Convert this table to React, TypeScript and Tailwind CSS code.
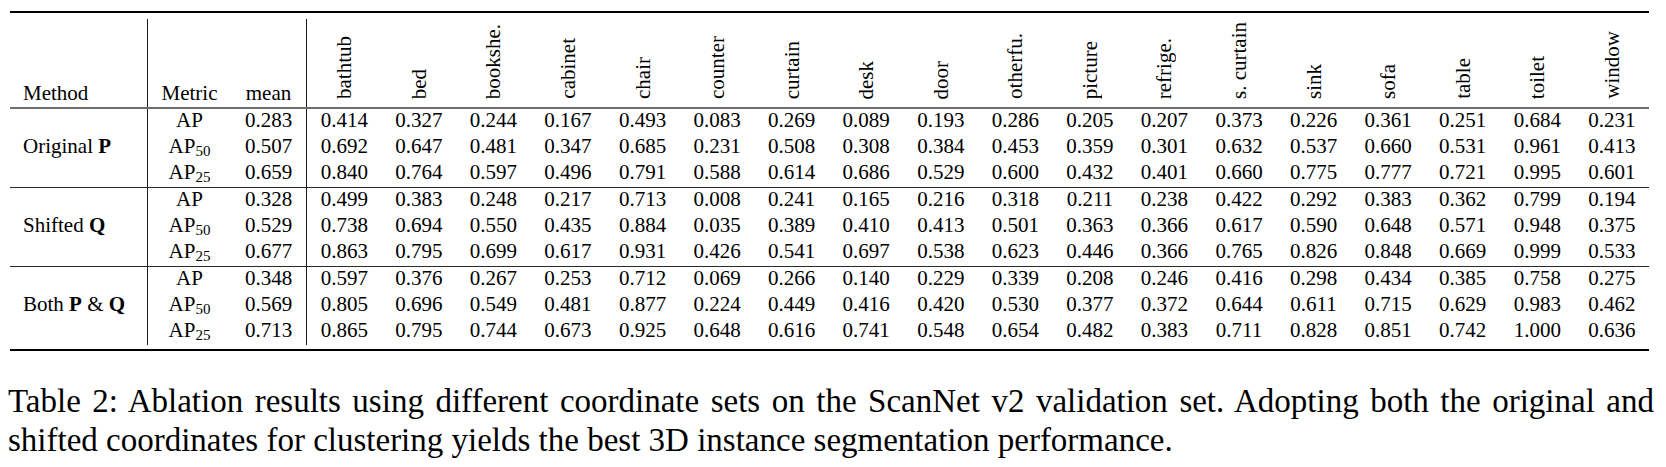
import React from "react";

const classes = [
  "bathtub",
  "bed",
  "bookshe.",
  "cabinet",
  "chair",
  "counter",
  "curtain",
  "desk",
  "door",
  "otherfu.",
  "picture",
  "refrige.",
  "s. curtain",
  "sink",
  "sofa",
  "table",
  "toilet",
  "window",
];

type Group = {
  label: React.ReactNode;
  rows: { metric: string; mean: string; vals: string[] }[];
};

const split = (s: string) => s.trim().split(/\s+/);

const groups: Group[] = [
  {
    label: (
      <>
        Original <b>P</b>
      </>
    ),
    rows: [
      { metric: "", mean: "0.283", vals: split("0.414 0.327 0.244 0.167 0.493 0.083 0.269 0.089 0.193 0.286 0.205 0.207 0.373 0.226 0.361 0.251 0.684 0.231") },
      { metric: "50", mean: "0.507", vals: split("0.692 0.647 0.481 0.347 0.685 0.231 0.508 0.308 0.384 0.453 0.359 0.301 0.632 0.537 0.660 0.531 0.961 0.413") },
      { metric: "25", mean: "0.659", vals: split("0.840 0.764 0.597 0.496 0.791 0.588 0.614 0.686 0.529 0.600 0.432 0.401 0.660 0.775 0.777 0.721 0.995 0.601") },
    ],
  },
  {
    label: (
      <>
        Shifted <b>Q</b>
      </>
    ),
    rows: [
      { metric: "", mean: "0.328", vals: split("0.499 0.383 0.248 0.217 0.713 0.008 0.241 0.165 0.216 0.318 0.211 0.238 0.422 0.292 0.383 0.362 0.799 0.194") },
      { metric: "50", mean: "0.529", vals: split("0.738 0.694 0.550 0.435 0.884 0.035 0.389 0.410 0.413 0.501 0.363 0.366 0.617 0.590 0.648 0.571 0.948 0.375") },
      { metric: "25", mean: "0.677", vals: split("0.863 0.795 0.699 0.617 0.931 0.426 0.541 0.697 0.538 0.623 0.446 0.366 0.765 0.826 0.848 0.669 0.999 0.533") },
    ],
  },
  {
    label: (
      <>
        Both <b>P</b> &amp; <b>Q</b>
      </>
    ),
    rows: [
      { metric: "", mean: "0.348", vals: split("0.597 0.376 0.267 0.253 0.712 0.069 0.266 0.140 0.229 0.339 0.208 0.246 0.416 0.298 0.434 0.385 0.758 0.275") },
      { metric: "50", mean: "0.569", vals: split("0.805 0.696 0.549 0.481 0.877 0.224 0.449 0.416 0.420 0.530 0.377 0.372 0.644 0.611 0.715 0.629 0.983 0.462") },
      { metric: "25", mean: "0.713", vals: split("0.865 0.795 0.744 0.673 0.925 0.648 0.616 0.741 0.548 0.654 0.482 0.383 0.711 0.828 0.851 0.742 1.000 0.636") },
    ],
  },
];

function Metric({ sub }: { sub: string }) {
  return (
    <span>
      AP
      {sub && <span className="text-[15px] align-[-3px]">{sub}</span>}
    </span>
  );
}

export default function App() {
  return (
    <div
      className="w-[1666px] h-[467px] bg-white text-black overflow-hidden"
      style={{ fontFamily: '"Liberation Serif", "Times New Roman", serif' }}
    >
      <div className="ml-[10px] w-[1639px] pt-[11px] text-[21px]">
        {/* top rule */}
        <div className="h-[2px] bg-black" />
        <div className="h-[6px]" />
        {/* header */}
        <div className="flex h-[88px] items-stretch leading-[22px]">
          <div className="w-[138px] border-r border-[#1a1a1a] pl-[13px] flex items-end pb-[3px]">
            Method
          </div>
          <div className="w-[83px] flex items-end justify-center pb-[3px]">Metric</div>
          <div className="w-[76px] border-r border-[#1a1a1a] flex items-end justify-center pb-[3px]">
            mean
          </div>
          {classes.map((c) => (
            <div key={c} className="flex-1 flex items-end justify-center pb-[8px]">
              <span className="[writing-mode:vertical-rl] rotate-180 whitespace-nowrap">{c}</span>
            </div>
          ))}
        </div>
        {/* mid rule */}
        <div className="h-[2px] bg-[#6e6e6e]" />
        {groups.map((g, gi) => (
          <div key={gi}>
            {gi > 0 && <div className="h-px bg-[#2a2a2a]" />}
            {g.rows.map((r, ri) => (
              <div key={ri} className="flex h-[26px] leading-[22px]">
                <div className="w-[138px] border-r border-[#1a1a1a] pl-[13px] whitespace-nowrap">
                  {ri === 1 ? g.label : null}
                </div>
                <div className="w-[83px] text-center">
                  <Metric sub={r.metric} />
                </div>
                <div className="w-[76px] border-r border-[#1a1a1a] text-center">{r.mean}</div>
                {r.vals.map((v, vi) => (
                  <div key={vi} className="flex-1 text-center">
                    {v}
                  </div>
                ))}
              </div>
            ))}
          </div>
        ))}
        <div className="h-[4px]" />
        <div className="h-[2px] bg-black" />
      </div>
      <p className="ml-[8px] mt-[31px] w-[1646px] text-[33px] leading-[39px] text-justify">
        Table 2: Ablation results using different coordinate sets on the ScanNet v2 validation set. Adopting both the
        original and shifted coordinates for clustering yields the best 3D instance segmentation performance.
      </p>
    </div>
  );
}
